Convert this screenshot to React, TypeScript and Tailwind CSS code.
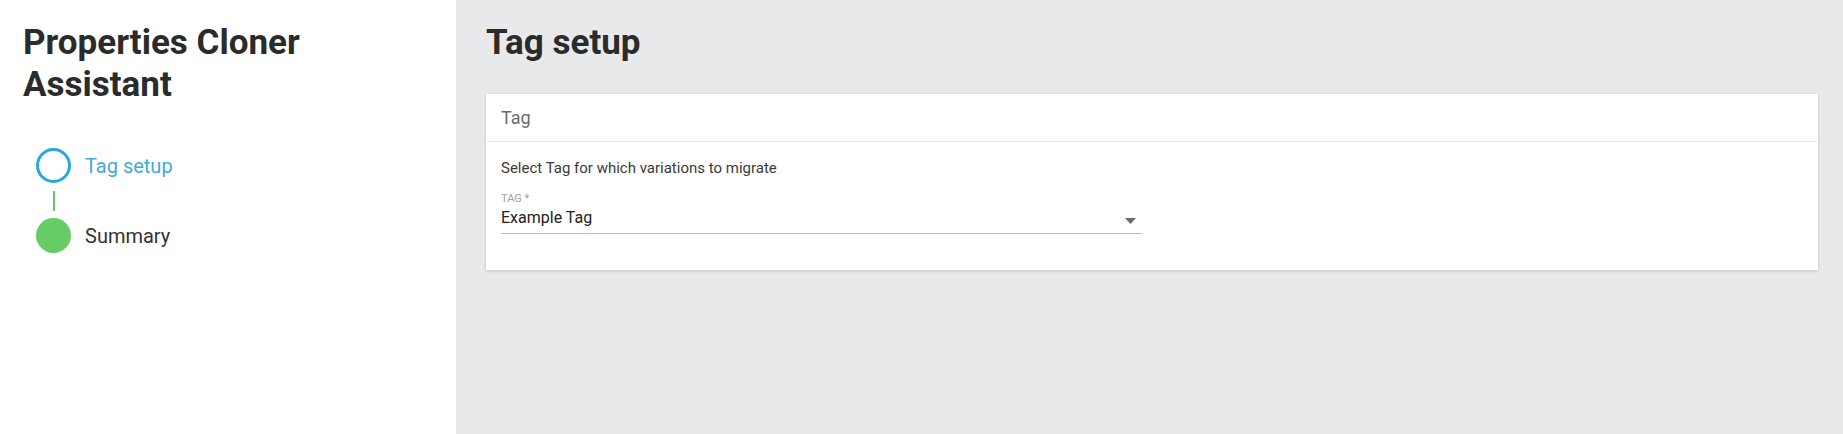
export default function App() {
  return (
    <div className="flex h-screen w-full font-['Roboto',sans-serif] text-[#2b2b2b]">
      {/* Sidebar */}
      <aside className="w-[456px] shrink-0 bg-white pl-[23px] pt-[22px]">
        <h1 className="text-[35px] font-bold leading-[42px] text-[#2b2b2b]">
          Properties Cloner
          <br />
          Assistant
        </h1>

        {/* Steps */}
        <ol className="mt-[42px] pl-[13px]">
          <li className="flex items-center gap-[14px]">
            <span className="h-[35px] w-[35px] rounded-full border-[3px] border-[#27a9dc]" />
            <span className="text-[20px] leading-[24px] text-[#44a9d9]">Tag setup</span>
          </li>
          <li className="flex h-[35px] w-[35px] items-center justify-center">
            <span className="h-[20px] w-[2px] bg-[#6cc66c]" />
          </li>
          <li className="flex items-center gap-[14px]">
            <span className="h-[35px] w-[35px] rounded-full bg-[#66cc66]" />
            <span className="text-[20px] leading-[24px] text-[#333]">Summary</span>
          </li>
        </ol>
      </aside>

      {/* Main */}
      <main className="flex-1 bg-[#e8e9eb] pl-[30px] pr-[25px] pt-[22px]">
        <h2 className="text-[35px] font-bold leading-[42px] text-[#2b2b2b]">Tag setup</h2>

        <section className="mt-[30px] bg-white shadow-[0_1px_3px_rgba(0,0,0,0.18)]">
          <div className="flex h-[48px] items-center border-b border-[#e6e6e6] px-[15px]">
            <span className="text-[18px] leading-[24px] text-[#6b6b6b]">Tag</span>
          </div>
          <div className="px-[15px] pb-[36px] pt-[16px]">
            <p className="text-[15px] leading-[20px] text-[#3a3a3a]">
              Select Tag for which variations to migrate
            </p>
            <div className="relative mt-[14px] w-[641px] border-b border-[#bdbdbd] pb-[5px]">
              <div className="text-[11px] leading-[13px] text-[#a0a0a0]">TAG *</div>
              <div className="mt-[3px] text-[16px] leading-[20px] text-[#222]">Example Tag</div>
              <svg
                className="absolute right-[6px] top-[26px]"
                width="11"
                height="6"
                viewBox="0 0 11 6"
              >
                <path d="M0 0h11L5.5 6z" fill="#6b6b6b" />
              </svg>
            </div>
          </div>
        </section>
      </main>
    </div>
  );
}
